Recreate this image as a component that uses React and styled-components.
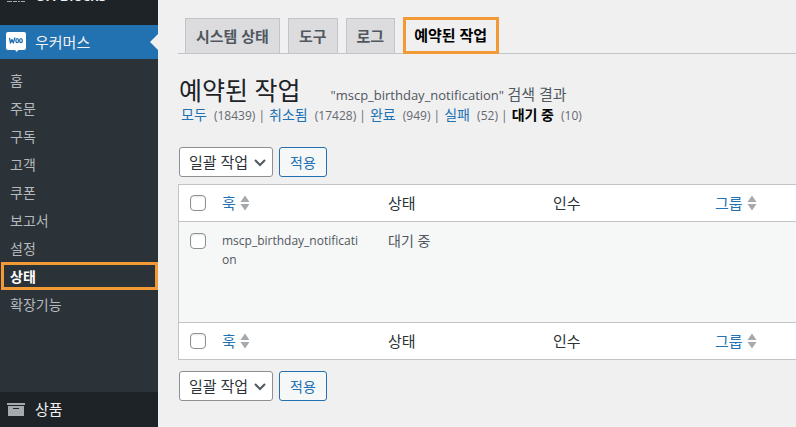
import React, { useState } from "react";
import styled, { createGlobalStyle, css } from "styled-components";

const GlobalStyle = createGlobalStyle`
	* {
		box-sizing: border-box;
	}
	body {
		margin: 0;
		background: #f0f0f1;
		color: #3c434a;
		font-family: "Open Sans", "Noto Sans CJK KR", sans-serif;
		font-size: 12px;
		line-height: 19px;
	}
	a {
		color: #2271b1;
		text-decoration: none;
	}
`;

const Layout = styled.div`
	display: flex;
	height: 100vh;
	overflow: hidden;
`;

// ANCHOR Sidebar
const Sidebar = styled.nav`
	display: flex;
	flex-direction: column;
	flex: 0 0 158px;
	background: #1d2327;
`;

const ScrolledTop = styled.div`
	display: flex;
	flex-direction: column;
	justify-content: flex-end;
	flex: 0 0 25px;
	overflow: hidden;
	padding-bottom: 13px;
`;

const MenuItem = styled.a`
	display: flex;
	align-items: center;
	flex: 0 0 34px;
	gap: 9px;
	padding-left: 6px;
	font-size: 15px;
	font-weight: ${(props) => (props.$bold ? 600 : 400)};
	color: #f0f0f1;
	background: ${(props) => (props.$current ? "#2271b1" : "transparent")};
	svg {
		flex: none;
	}
`;

const Arrow = styled.svg`
	margin-left: auto;
`;

const Submenu = styled.ul`
	flex: none;
	margin: 0;
	padding: 7px 0 74px;
	list-style: none;
	background: #2c3338;
`;

const SubLink = styled.a`
	display: flex;
	align-items: center;
	height: 28px;
	padding-left: 10px;
	font-size: 14px;
	color: #b4b9be;
	${(props) =>
		props.$current &&
		css`
			margin: 0 0 0 1px;
			padding-left: 6px;
			border: 3px solid #f29a35;
			color: #fff;
			font-weight: 700;
		`}
`;

// ANCHOR Content
const Main = styled.main`
	flex: 1;
	min-width: 0;
	padding: 17px 0 0 20px;
`;

const Tabs = styled.div`
	display: flex;
	align-items: flex-end;
	gap: 8px;
	height: 37px;
	padding-left: 7px;
	border-bottom: 1px solid #c3c4c7;
`;

const TabLink = styled.a`
	display: flex;
	align-items: center;
	height: 35px;
	padding: 0 10px;
	border: 1px solid #c3c4c7;
	border-bottom: 0;
	background: #dcdcde;
	color: #50575e;
	font-size: 15px;
	font-weight: 600;
	${(props) =>
		props.$active &&
		css`
			height: 37px;
			margin-bottom: -1px;
			padding: 0 9px 0 8px;
			border: 3px solid #f29a35;
			background: #f0f0f1;
			color: #000;
		`}
`;

const TitleRow = styled.div`
	display: flex;
	align-items: baseline;
	gap: 30px;
	padding: 22px 0 0 1px;
	h1 {
		margin: 0;
		color: #1d2327;
		font-size: 25px;
		font-weight: 400;
		line-height: 29px;
	}
`;

const SearchNote = styled.span`
	color: #50575e;
	font-size: 13px;
	em {
		font-size: 15px;
		font-style: normal;
	}
`;

const Filters = styled.ul`
	display: flex;
	gap: 4px;
	margin: 0 0 22px;
	padding: 0 0 0 3px;
	list-style: none;
	color: #646970;
	a {
		margin-right: 4px;
		font-size: 14px;
	}
	a[aria-current] {
		color: #000;
		font-weight: 700;
	}
`;

const Actions = styled.div`
	display: flex;
	gap: 6px;
	padding-left: 1px;
`;

const SelectBox = styled.div`
	display: grid;
	align-items: center;
	select,
	svg {
		grid-area: 1 / 1;
	}
	select {
		appearance: none;
		width: 94px;
		height: 30px;
		padding: 0 24px 0 9px;
		border: 1px solid #8c8f94;
		border-radius: 3px;
		background: #fff;
		color: #2c3338;
		font: inherit;
		font-size: 15px;
	}
	svg {
		justify-self: end;
		margin-right: 7px;
		pointer-events: none;
	}
`;

const Button = styled.button`
	width: 48px;
	height: 30px;
	padding: 0;
	border: 1px solid #2271b1;
	border-radius: 3px;
	background: #f6f7f7;
	color: #2271b1;
	font: inherit;
	font-size: 14px;
`;

const Table = styled.table`
	width: 100%;
	margin: 7px 0 11px;
	border: 1px solid #c3c4c7;
	border-right: 0;
	border-spacing: 0;
	table-layout: fixed;
	background: #fff;
	th,
	td {
		padding: 0 10px;
		text-align: left;
		font-weight: 400;
	}
	th {
		height: 37px;
		color: #2c3338;
		font-size: 15px;
	}
	thead th {
		border-bottom: 1px solid #c3c4c7;
	}
	tfoot th {
		border-top: 1px solid #c3c4c7;
	}
	td {
		height: 100px;
		padding-top: 9px;
		background: #f6f7f7;
		color: #50575e;
		vertical-align: top;
	}
	th:first-child,
	td:first-child {
		padding: 0 0 0 11px;
	}
	td:first-child {
		padding-top: 11px;
	}
`;

const HookCell = styled.td`
	&& {
		padding-right: 16px;
	}
	word-break: break-all;
`;

const StatusCell = styled.td`
	font-size: 14px;
`;

const Checkbox = styled.input`
	appearance: none;
	display: block;
	width: 16px;
	height: 16px;
	margin: 0;
	border: 1px solid #8c8f94;
	border-radius: 4px;
	background: #fff;
	box-shadow: inset 0 1px 2px rgba(0, 0, 0, 0.1);
	&:checked {
		background: #2271b1;
	}
`;

const SortLink = styled.a`
	display: flex;
	align-items: center;
	gap: 4px;
`;

const SortIcon = () => (
	<svg width="10" height="16" viewBox="0 0 10 16" fill="#a7aaad">
		<path d="M5 .5 9.500 7H.5zM5 15.500.5 9h9z" />
	</svg>
);

const WooIcon = () => (
	<svg width="20" height="20" viewBox="0 0 20 20">
		<path
			fill="#fff"
			d="M2 0h16a2 2 0 0 1 2 2v14a2 2 0 0 1-2 2h-6l-1 2-2-2H2a2 2 0 0 1-2-2V2a2 2 0 0 1 2-2z"
		/>
		<g fill="none" stroke="#2271b1" strokeWidth="1.300" strokeLinejoin="round">
			<path d="M3.500 6l1 5L6 7.500 7.300 11 9 5.500" />
			<ellipse cx="11.200" cy="8.700" rx="1.300" ry="2" />
			<ellipse cx="15" cy="8.700" rx="1.300" ry="2" />
		</g>
	</svg>
);

const BoxIcon = () => (
	<svg width="20" height="20" viewBox="0 0 20 20" fill="#a7aaad">
		<path d="M1 4h18v2H1zM2 7h16v10H2zm5 2v1h6V9z" fillRule="evenodd" />
	</svg>
);

const BlocksIcon = () => (
	<svg width="20" height="20" viewBox="0 0 20 20" fill="none" stroke="#a7aaad">
		<path d="M1 3.500h18M1 16.500h5M7 16.500h4M12 16.500h2M15 16.500h4" />
	</svg>
);

const submenu = ["홈", "주문", "구독", "고객", "쿠폰", "보고서", "설정", "상태", "확장기능"];
const tabs = ["시스템 상태", "도구", "로그", "예약된 작업"];
const filters = [
	{ label: "모두", count: 18439 },
	{ label: "취소됨", count: 17428 },
	{ label: "완료", count: 949 },
	{ label: "실패", count: 52 },
	{ label: "대기 중", count: 10 },
];

const BulkActions = ({ label }) => (
	<Actions>
		<SelectBox>
			<select aria-label={label}>
				<option>일괄 작업</option>
			</select>
			<svg width="12" height="12" viewBox="0 0 12 12" fill="none" stroke="#50575e" strokeWidth="2">
				<path d="M1 4l5 5 5-5" />
			</svg>
		</SelectBox>
		<Button type="button">적용</Button>
	</Actions>
);

const HeadingRow = ({ checked, onChange }) => (
	<tr>
		<th>
			<Checkbox type="checkbox" aria-label="모두 선택" checked={checked} onChange={onChange} />
		</th>
		<th>
			<SortLink href="#hook">
				훅 <SortIcon />
			</SortLink>
		</th>
		<th>상태</th>
		<th>인수</th>
		<th>
			<SortLink href="#group">
				그룹 <SortIcon />
			</SortLink>
		</th>
	</tr>
);

const App = () => {
	const [checked, setChecked] = useState(false);
	const toggle = () => setChecked(!checked);

	return (
		<Layout>
			<GlobalStyle />
			<Sidebar>
				<ScrolledTop>
					<MenuItem href="#blocks" $bold>
						<BlocksIcon /> UX Blocks
					</MenuItem>
				</ScrolledTop>
				<MenuItem href="#woo" $current>
					<WooIcon /> 우커머스
					<Arrow width="8" height="16" viewBox="0 0 8 16" fill="#f0f0f1">
						<path d="M8 0v16L0 8z" />
					</Arrow>
				</MenuItem>
				<Submenu>
					{submenu.map((item) => (
						<li key={item}>
							<SubLink href="#sub" $current={item === "상태"}>
								{item}
							</SubLink>
						</li>
					))}
				</Submenu>
				<MenuItem href="#products">
					<BoxIcon /> 상품
				</MenuItem>
			</Sidebar>
			<Main>
				<Tabs>
					{tabs.map((tab) => (
						<TabLink key={tab} href="#tab" $active={tab === "예약된 작업"}>
							{tab}
						</TabLink>
					))}
				</Tabs>
				<TitleRow>
					<h1>예약된 작업</h1>
					<SearchNote>
						"mscp_birthday_notification" <em>검색 결과</em>
					</SearchNote>
				</TitleRow>
				<Filters>
					{filters.map(({ label, count }, i) => (
						<li key={label}>
							<a href="#filter" aria-current={label === "대기 중" ? "page" : undefined}>
								{label}
							</a>{" "}
							({count}){i < filters.length - 1 && " |"}
						</li>
					))}
				</Filters>
				<BulkActions label="일괄 작업 선택" />
				<Table>
					<colgroup>
						<col style={{ width: 33 }} />
						<col style={{ width: 166 }} />
						<col style={{ width: 165 }} />
						<col style={{ width: 162 }} />
						<col />
					</colgroup>
					<thead>
						<HeadingRow checked={checked} onChange={toggle} />
					</thead>
					<tbody>
						<tr>
							<td>
								<Checkbox type="checkbox" aria-label="작업 선택" checked={checked} onChange={toggle} />
							</td>
							<HookCell>mscp_birthday_notification</HookCell>
							<StatusCell>대기 중</StatusCell>
							<td />
							<td />
						</tr>
					</tbody>
					<tfoot>
						<HeadingRow checked={checked} onChange={toggle} />
					</tfoot>
				</Table>
				<BulkActions label="하단 일괄 작업 선택" />
			</Main>
		</Layout>
	);
};
export default App;
